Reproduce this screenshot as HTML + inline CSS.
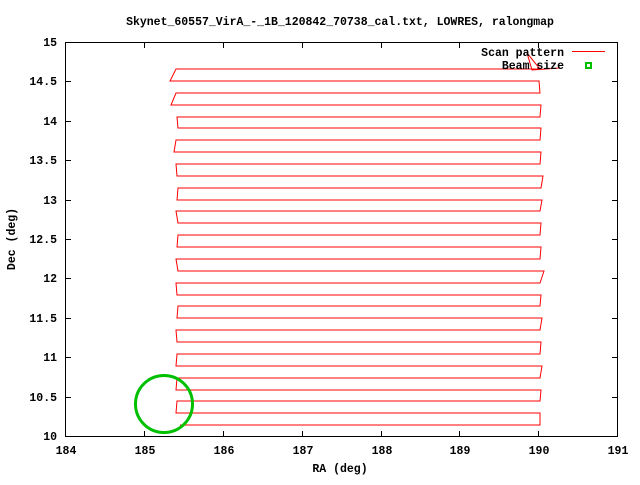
<!DOCTYPE html>
<html><head><meta charset="utf-8"><style>
html,body{margin:0;padding:0;background:#fff;}
svg text{font-family:"Liberation Mono","DejaVu Sans Mono",monospace;font-weight:bold;font-size:11.5px;fill:#000;}
</style></head><body>
<svg width="640" height="480" viewBox="0 0 640 480" xmlns="http://www.w3.org/2000/svg">
<rect width="640" height="480" fill="#fff"/>
<text x="340" y="25" text-anchor="middle">Skynet_60557_VirA_-_1B_120842_70738_cal.txt, LOWRES, ralongmap</text>
<g stroke="#000" stroke-width="1" fill="none" shape-rendering="crispEdges">
<rect x="65.5" y="42.5" width="552" height="394"/>
<path d="M144.5 437V431M144.5 42V48M223.5 437V431M223.5 42V48M302.5 437V431M302.5 42V48M381.5 437V431M381.5 42V48M459.5 437V431M459.5 42V48M538.5 437V431M538.5 42V48
M65 397.5H71M618 397.5H612M65 357.5H71M618 357.5H612M65 318.5H71M618 318.5H612M65 278.5H71M618 278.5H612M65 239.5H71M618 239.5H612M65 200.5H71M618 200.5H612M65 160.5H71M618 160.5H612M65 121.5H71M618 121.5H612M65 81.5H71M618 81.5H612"/>
</g>
<g text-anchor="end">
<text x="57" y="440">10</text><text x="57" y="401">10.5</text><text x="57" y="361">11</text><text x="57" y="322">11.5</text><text x="57" y="282">12</text><text x="57" y="243">12.5</text><text x="57" y="204">13</text><text x="57" y="164">13.5</text><text x="57" y="125">14</text><text x="57" y="85">14.5</text><text x="57" y="46">15</text>
</g>
<g text-anchor="middle">
<text x="66" y="454">184</text><text x="145" y="454">185</text><text x="224" y="454">186</text><text x="303" y="454">187</text><text x="382" y="454">188</text><text x="460" y="454">189</text><text x="539" y="454">190</text><text x="618" y="454">191</text>
<text x="340" y="472">RA (deg)</text>
<text transform="translate(15,239) rotate(-90)">Dec (deg)</text>
</g>
<path fill="none" stroke="#f00" stroke-width="1" d="M180 425 H540 L540 413 H176 L177 401 H540 L541 390 H176 L177 378 H540 L542 366 H176 L177 354 H540 L541 342 H177 L176 330 H540 L542 318 H177 L178 306 H540 L541 295 H177 L176 283 H540 L544 271 H178 L176 259 H540 L541 247 H177 L178 235 H540 L541 223 H178 L176 211 H540 L542 200 H177 L178 188 H541 L543 176 H177 L176 164 H540 L541 152 H174 L176 140 H540 L541 128 H178 L177 117 H540 L541 105 H171 L176 93 H540 L539 81 H170 L176 69 H540 L527 53 L532 70 L560 68"/>
<circle cx="164" cy="404" r="28.5" fill="none" stroke="#00c000" stroke-width="3"/>
<text x="564" y="56" text-anchor="end">Scan pattern</text>
<rect x="572" y="51" width="33" height="1" fill="#f00"/>
<text x="564" y="69" text-anchor="end">Beam size</text>
<rect x="585" y="62" width="7" height="7" fill="#00c000"/>
<rect x="587" y="64" width="3" height="3" fill="#fff"/>
</svg>
</body></html>
